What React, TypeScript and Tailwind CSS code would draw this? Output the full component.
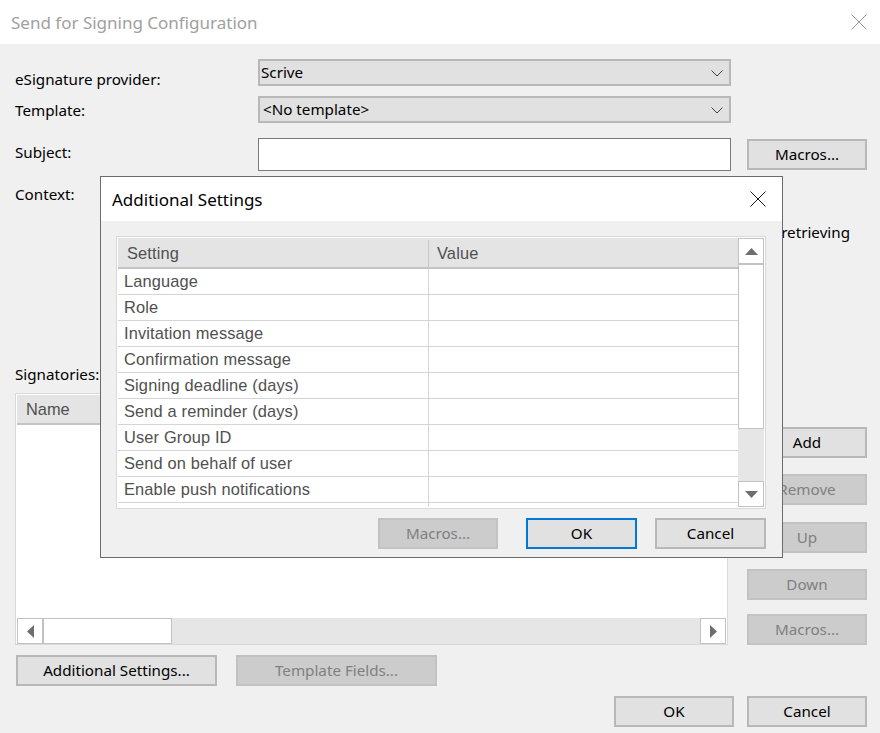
import type { ReactNode } from "react";

const base = "box-border flex items-center justify-center border-2 pt-[1px] text-[15.2px]";

function Btn({ className = "", disabled = false, children }: { className?: string; disabled?: boolean; children: ReactNode }) {
  return (
    <div
      className={`${base} h-[31px] ${
        disabled ? "border-[#c2c2c2] bg-[#cccccc] text-[#808080]" : "border-[#b8b8b8] bg-[#e1e1e1] text-black"
      } ${className}`}
    >
      {children}
    </div>
  );
}

function Combo({ label, className = "" }: { label: string; className?: string }) {
  return (
    <div className="box-border flex h-[27px] w-[473px] items-center justify-between border-2 border-[#b8b8b8] bg-[#e1e1e1] pl-[1px] pr-[6px] pt-[1px] text-[15.2px] text-black">
      <span className={className}>{label}</span>
      <svg width="12" height="7" viewBox="0 0 12 7" fill="none" stroke="#404040" strokeWidth="1">
        <path d="M0.5 0.5 L6 6 L11.5 0.5" />
      </svg>
    </div>
  );
}

function CloseX({ color }: { color: string }) {
  return (
    <svg width="16" height="16" viewBox="0 0 16 16" fill="none" stroke={color} strokeWidth="1">
      <path d="M0.5 0.5 L15.5 15.5 M15.5 0.5 L0.5 15.5" />
    </svg>
  );
}

function Arrow({ dir }: { dir: "up" | "down" | "left" | "right" }) {
  const d = {
    up: "M6.5 0 L13 7 L0 7 Z",
    down: "M0 0 L13 0 L6.5 7 Z",
    left: "M7 0 L7 13 L0 6.5 Z",
    right: "M0 0 L7 6.5 L0 13 Z",
  }[dir];
  const horizontal = dir === "up" || dir === "down";
  return (
    <div className="box-border flex h-[26px] w-[26px] shrink-0 items-center justify-center border border-[#c2c2c2] bg-white">
      <svg width={horizontal ? 13 : 7} height={horizontal ? 7 : 13} viewBox={horizontal ? "0 0 13 7" : "0 0 7 13"}>
        <path d={d} fill="#6e6e6e" />
      </svg>
    </div>
  );
}

const settings = [
  "Language",
  "Role",
  "Invitation message",
  "Confirmation message",
  "Signing deadline (days)",
  "Send a reminder (days)",
  "User Group ID",
  "Send on behalf of user",
  "Enable push notifications",
];

export default function App() {
  return (
    <div className="relative h-[733px] w-[880px] overflow-hidden bg-[#f0f0f0] font-['Noto_Sans','Open_Sans',sans-serif] text-[15.2px] leading-none text-black">
      {/* main window title */}
      <div className="flex h-[44px] items-center justify-between bg-white pl-[11px] pr-[13px] text-[17px] text-[#a0a0a0]">
        <span>Send for Signing Configuration</span>
        <CloseX color="#9a9a9a" />
      </div>

      {/* main form */}
      <div className="flex flex-col pl-[15px] pr-[13px] pt-[15px]">
        <div className="flex h-[27px] items-center">
          <span className="w-[243px] pt-[15px]">eSignature provider:</span>
          <Combo label="Scrive" />
        </div>
        <div className="mt-[10px] flex h-[27px] items-center">
          <span className="w-[243px] pt-[2px]">Template:</span>
          <Combo label="<No template>" className="pl-[2px]" />
        </div>
        <div className="mt-[15px] flex h-[33px] items-center">
          <span className="w-[243px] pb-[3px]">Subject:</span>
          <div className="box-border h-[33px] w-[473px] border border-[#7a7a7a] bg-white" />
          <Btn className="ml-[16px] w-[120px]">Macros...</Btn>
        </div>
        <div className="mt-[16px] flex h-[42px] justify-between">
          <span>Context:</span>
          <span className="mt-[38px] pr-[17px]">retrieving</span>
        </div>

        <div className="mt-[138px] h-[26px]">Signatories:</div>
        <div className="flex items-start">
          {/* signatories list */}
          <div className="box-border flex h-[252px] w-[713px] flex-col justify-between border border-[#d9d9d9] bg-white px-[1px] pt-[1px]">
            <div className="flex h-[30px] items-center border-b-2 border-[#c4c4c4] bg-[#e4e4e4] pl-[9px] font-['Liberation_Sans',Arial,sans-serif] text-[16.4px] text-[#505050]">
              Name
            </div>
            <div className="flex h-[26px] items-center bg-[#e6e6e6]">
              <Arrow dir="left" />
              <div className="box-border h-[26px] w-[129px] border border-[#c2c2c2] bg-white" />
              <div className="flex-1" />
              <Arrow dir="right" />
            </div>
          </div>
          <div className="ml-[19px] flex flex-col pt-[34px]">
            <Btn className="w-[120px]">Add</Btn>
            <Btn disabled className="mt-[16px] w-[120px]">Remove</Btn>
            <Btn disabled className="mt-[17px] w-[120px]">Up</Btn>
            <Btn disabled className="mt-[16px] w-[120px]">Down</Btn>
            <Btn disabled className="mt-[14px] w-[120px]">Macros...</Btn>
          </div>
        </div>
        <div className="ml-[1px] mt-[10px] flex gap-[19px]">
          <Btn className="w-[201px]">Additional Settings...</Btn>
          <Btn disabled className="w-[201px]">Template Fields...</Btn>
        </div>
        <div className="mt-[10px] flex justify-end gap-[13px]">
          <Btn className="w-[120px]">OK</Btn>
          <Btn className="w-[120px]">Cancel</Btn>
        </div>
      </div>

      {/* Additional Settings dialog on top */}
      <div className="absolute left-[100px] top-[176px] box-border flex h-[382px] w-[683px] flex-col border border-[#6b6b6b] bg-[#f0f0f0]">
        <div className="flex h-[44px] shrink-0 items-center justify-between bg-white pl-[11px] pr-[16px] text-[17px] text-black">
          <span>Additional Settings</span>
          <CloseX color="#1a1a1a" />
        </div>
        <div className="ml-[15px] mt-[15px] box-border flex h-[273px] w-[650px] border border-[#d9d9d9] bg-white p-[1px]">
          <div className="flex min-w-0 flex-1 flex-col overflow-hidden font-['Liberation_Sans',Arial,sans-serif] text-[16.4px] tracking-[0.15px] text-[#505050]">
            <div className="flex h-[31px] shrink-0 items-center border-b-2 border-[#c4c4c4] bg-[#e4e4e4] pt-[2px]">
              <span className="box-border flex h-[27px] w-[311px] shrink-0 items-center border-r border-[#c8c8c8] pl-[9px]">Setting</span>
              <span className="pl-[8px]">Value</span>
            </div>
            {settings.map((s) => (
              <div key={s} className="flex h-[26px] shrink-0 items-center border-b border-[#d5d5d5]">
                <span className="box-border flex h-[26px] w-[311px] shrink-0 items-center border-r border-[#d5d5d5] pl-[6px]">{s}</span>
              </div>
            ))}
            <div className="ml-[310px] h-[4px] w-[1px] shrink-0 bg-[#d5d5d5]" />
          </div>
          <div className="flex w-[26px] shrink-0 flex-col bg-[#e6e6e6]">
            <Arrow dir="up" />
            <div className="box-border h-[165px] w-[26px] border border-[#c2c2c2] bg-white" />
            <div className="flex-1" />
            <Arrow dir="down" />
          </div>
        </div>
        <div className="ml-[277px] mt-[9px] flex">
          <Btn disabled className="w-[120px]">Macros...</Btn>
          <Btn className="ml-[28px] w-[111px] !border-[#0078d7]">OK</Btn>
          <Btn className="ml-[18px] w-[111px]">Cancel</Btn>
        </div>
      </div>
    </div>
  );
}
